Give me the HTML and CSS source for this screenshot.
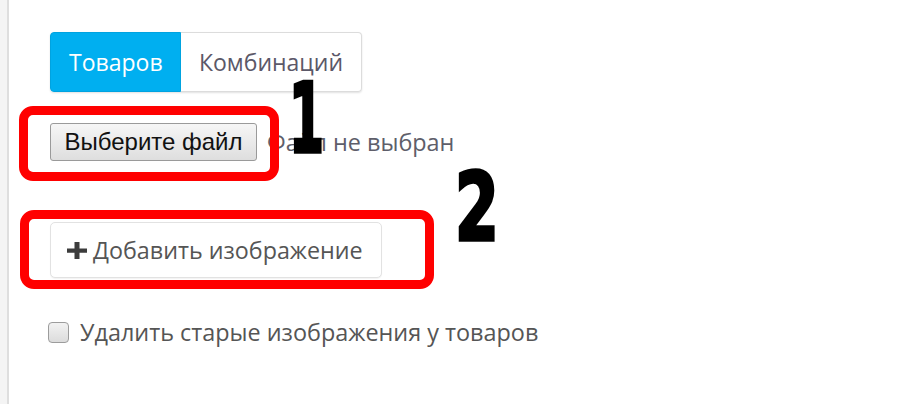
FILE: index.html
```html
<!DOCTYPE html>
<html lang="ru">
<head>
<meta charset="utf-8">
<title>Импорт изображений</title>
<link rel="stylesheet" href="styles.css">
</head>
<body>
<div class="page">
  <div class="sidebar"></div>
  <main class="main">
    <div class="tabs">
      <button class="tab tab-active">Товаров</button>
      <button class="tab">Комбинаций</button>
    </div>
    <div class="file-row">
      <button class="file-btn">Выберите файл</button>
      <span class="file-status">Файл не выбран</span>
    </div>
    <div class="add-row">
      <button class="add-btn"><svg class="plus" viewBox="0 0 16 16" width="20" height="17" preserveAspectRatio="none"><path d="M6 0h4v6h6v4h-6v6H6v-6H0V6h6z" fill="#3c3c3c"/></svg>Добавить изображение</button>
    </div>
    <label class="check-row">
      <span class="checkbox"></span>
      <span class="check-label">Удалить старые изображения у товаров</span>
    </label>

    <div class="mark mark-1"></div>
    <div class="mark mark-2"></div>
    <div class="num num-1">1</div>
    <div class="num num-2">2</div>
  </main>
</div>
</body>
</html>
```

FILE: styles.css
```css
html, body {
  margin: 0;
  padding: 0;
  background: #fff;
}
.page {
  display: flex;
  height: 404px;
  overflow: hidden;
}
.sidebar {
  width: 7px;
  flex: none;
  background: #f4f4f4;
  border-right: 2px solid #dedede;
}
.main {
  position: relative;
  flex: 1;
  padding: 32px 0 0 41px;
  font-family: "Open Sans", "Noto Sans", sans-serif;
  color: #555;
}
.tabs {
  display: inline-flex;
  height: 60px;
  border-radius: 4px;
  box-shadow: 0 1px 2px rgba(0,0,0,0.12);
}
.tab {
  font-family: "Open Sans", sans-serif;
  font-size: 23px;
  padding: 0 18px;
  border: 1px solid #dcdcdc;
  background: #fff;
  color: #5b5868;
  margin: 0;
}
.tab:last-child {
  border-left: 0;
  border-radius: 0 4px 4px 0;
}
.tab-active {
  background: #00aff0;
  border-color: #00a3e0;
  color: #fff;
  border-radius: 4px 0 0 4px;
  width: 131px;
}
.file-row {
  display: flex;
  align-items: center;
  gap: 10px;
  margin-top: 31px;
}
.file-btn {
  height: 38px;
  width: 207px;
  padding: 0;
  font-family: "Liberation Sans", Arial, sans-serif;
  font-size: 24px;
  color: #111;
  border: 1px solid #9a9a9a;
  border-radius: 3px;
  background: linear-gradient(#f6f6f6, #dedede);
}
.file-status {
  font-size: 23.4px;
  color: #5e5e6a;
}
.add-row {
  margin-top: 61px;
}
.add-btn {
  display: inline-flex;
  align-items: center;
  gap: 6px;
  height: 56px;
  width: 332px;
  padding: 0 0 0 16px;
  font-family: "Open Sans", sans-serif;
  font-size: 23.3px;
  color: #555;
  background: #fff;
  border: 1px solid #e2e2e2;
  border-radius: 5px;
  box-shadow: 0 1px 1px rgba(0,0,0,0.05);
}
.plus {
  flex: none;
}
.check-row {
  display: flex;
  align-items: center;
  gap: 11px;
  margin-top: 38px;
  margin-left: -2px;
}
.checkbox {
  width: 19px;
  height: 19px;
  border: 1px solid #9c9c9c;
  border-radius: 4px;
  background: linear-gradient(#f2f2f2, #dcdcdc);
}
.check-label {
  font-size: 23.4px;
  color: #555;
}
.mark {
  position: absolute;
  border: 9px solid #ff0000;
  border-radius: 14px;
  box-sizing: border-box;
}
.mark-1 {
  left: 10px;
  top: 106px;
  width: 260px;
  height: 75px;
}
.mark-2 {
  left: 11px;
  top: 210px;
  width: 414px;
  height: 79px;
}
.num {
  position: absolute;
  font-family: "Liberation Sans Narrow", "DejaVu Sans Condensed", sans-serif;
  font-weight: bold;
  font-size: 70px;
  line-height: 1;
  color: #000;
  -webkit-text-stroke: 2.5px #000;
  transform-origin: top left;
}
.num-1 {
  left: 280px;
  top: 71px;
  transform: scale(0.8, 1.38);
}
.num-2 {
  left: 446px;
  top: 160px;
  transform: scaleY(1.36);
}
```
